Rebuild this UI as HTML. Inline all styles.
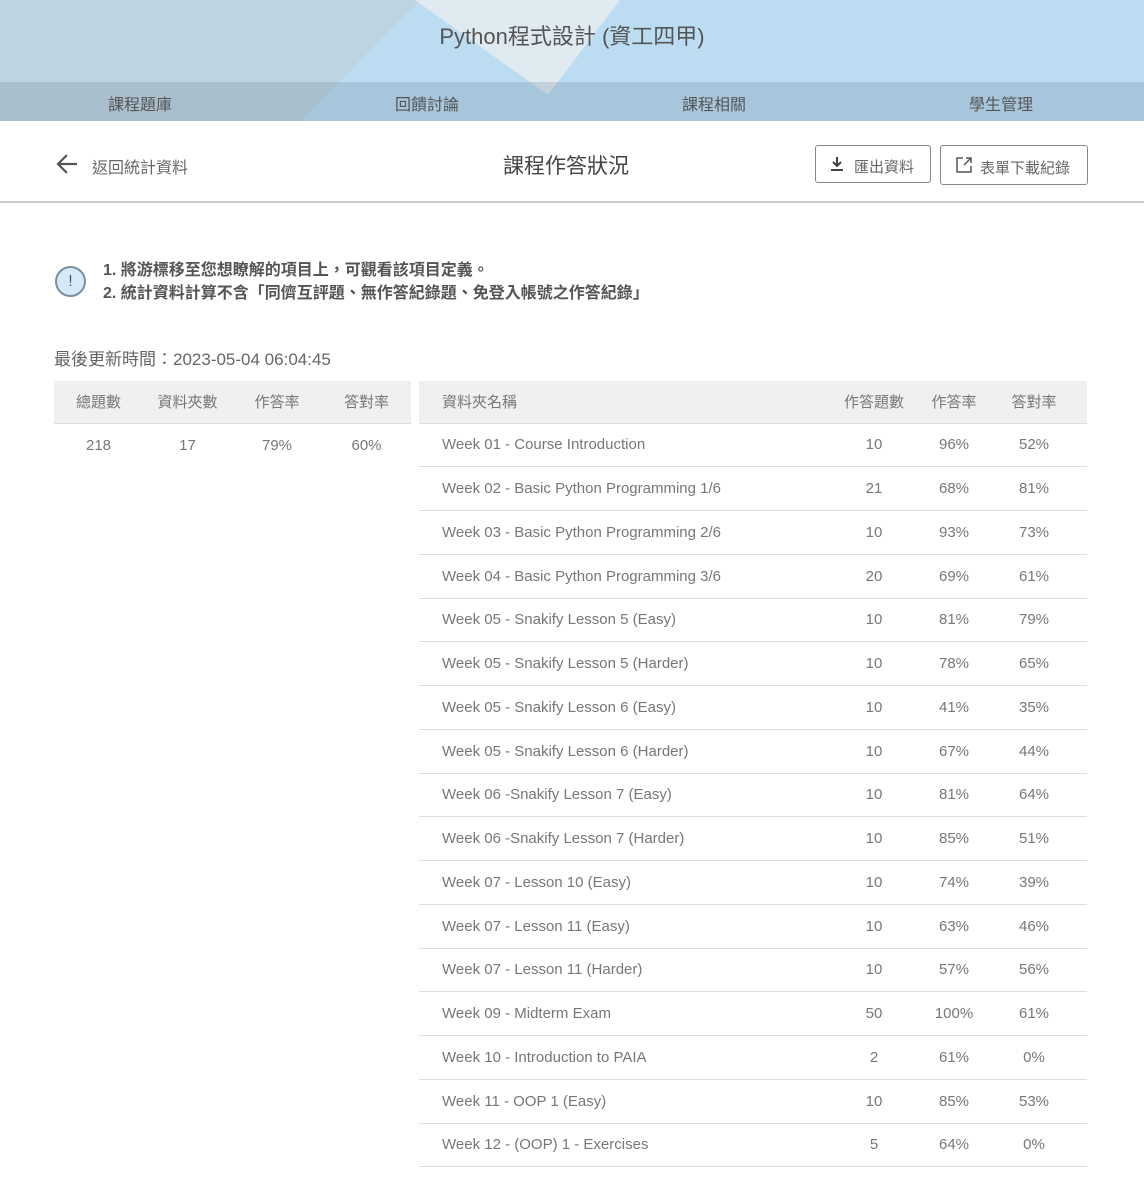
<!DOCTYPE html>
<html><head><meta charset="utf-8"><style>
*{margin:0;padding:0;box-sizing:border-box}
body{width:1144px;height:1183px;background:#fff;font-family:"Liberation Sans","Noto Sans CJK TC",sans-serif;color:#555;position:relative;overflow:hidden}
.hdr{position:absolute;left:0;top:0;width:1144px;height:121px;overflow:hidden;background:#bcdcf2}
.nav{position:absolute;left:0;top:82px;width:1144px;height:39px;background:rgba(90,110,130,0.2)}
.nav span{position:absolute;top:9px;font-size:16px;color:#555;transform:translateX(-50%)}
.title{position:absolute;top:19px;width:100%;text-align:center;font-size:22px;color:#555}
.ab{position:absolute}
table{border-collapse:collapse;font-size:15px;color:#777;table-layout:fixed}
th{font-weight:normal;background:#f0f0f0;height:42px;color:#777}
td{height:43.75px;border-bottom:1px solid #ddd}
</style></head><body>
<div class="hdr">
<svg width="1144" height="121" style="position:absolute;left:0;top:0">
<polygon points="0,0 420,0 300,121 0,121" fill="#bed4e1"/>
<polygon points="415,0 620,0 548,95" fill="#dfeaf1"/>
</svg>
<div class="title">Python程式設計 (資工四甲)</div>
<div class="nav"><span style="left:140px">課程題庫</span><span style="left:427px">回饋討論</span><span style="left:714px">課程相關</span><span style="left:1001px">學生管理</span></div>
</div>
<svg class="ab" style="left:56px;top:153px" width="24" height="22" viewBox="0 0 24 22"><path d="M21 11H3M11 2L2 11L11 20" stroke="#555" stroke-width="2.2" fill="none"/></svg>
<div class="ab" style="left:92px;top:154px;font-size:16px;color:#666">返回統計資料</div>
<div class="ab" style="left:503px;top:150px;font-size:21px;color:#444">課程作答狀況</div>
<div class="ab" style="left:815px;top:145px;width:116px;height:38px;border:1px solid #888;border-radius:3px;font-size:15px;color:#666;padding:10px 0 0 38px">匯出資料
<svg style="position:absolute;left:14px;top:10px" width="14" height="16" viewBox="0 0 14 16"><path d="M7 1V10M3 6L7 10L11 6M1 14H13" stroke="#444" stroke-width="2" fill="none"/></svg></div>
<div class="ab" style="left:940px;top:145px;width:148px;height:40px;border:1px solid #888;border-radius:3px;font-size:15px;color:#666;padding:11px 0 0 39px">表單下載紀錄
<svg style="position:absolute;left:14px;top:10px" width="18" height="18" viewBox="0 0 18 18"><path d="M8 2H2V16H16V10M11 2H16V7M16 2L9 9" stroke="#555" stroke-width="1.5" fill="none"/></svg></div>
<div class="ab" style="left:0;top:201px;width:1144px;height:2px;background:#ccc"></div>
<div class="ab" style="left:55px;top:266px;width:31px;height:31px;border:2px solid #7a8ea0;border-radius:50%;background:#d6e9f7;text-align:center;font-size:16px;line-height:27px;color:#556">!</div>
<div class="ab" style="left:103px;top:259px;font-size:16px;font-weight:bold;color:#555;line-height:23px">1. 將游標移至您想瞭解的項目上，可觀看該項目定義。<br>2. 統計資料計算不含「同儕互評題、無作答紀錄題、免登入帳號之作答紀錄」</div>
<div class="ab" style="left:54px;top:345px;font-size:17px;color:#666">最後更新時間：2023-05-04 06:04:45</div>
<table class="ab" style="left:54px;top:381px;width:357px;text-align:center">
<colgroup><col style="width:89px"><col style="width:89px"><col style="width:90px"><col style="width:89px"></colgroup>
<tr><th>總題數</th><th>資料夾數</th><th>作答率</th><th>答對率</th></tr>
<tr><td style="border-bottom:none;border-top:1px solid #ddd">218</td><td style="border-bottom:none;border-top:1px solid #ddd">17</td><td style="border-bottom:none;border-top:1px solid #ddd">79%</td><td style="border-bottom:none;border-top:1px solid #ddd">60%</td></tr>
</table>
<table class="ab" style="left:419px;top:381px;width:668px">
<colgroup><col style="width:415px"><col style="width:80px"><col style="width:80px"><col style="width:93px"></colgroup>
<tr><th style="text-align:left;padding-left:23px;border-bottom:1px solid #ddd">資料夾名稱</th><th style="border-bottom:1px solid #ddd">作答題數</th><th style="border-bottom:1px solid #ddd">作答率</th><th style="border-bottom:1px solid #ddd;padding-right:13px">答對率</th></tr>
<tbody style="text-align:center">
<tr><td style="text-align:left;padding-left:23px">Week 01 - Course Introduction</td><td>10</td><td>96%</td><td style="padding-right:13px">52%</td></tr>
<tr><td style="text-align:left;padding-left:23px">Week 02 - Basic Python Programming 1/6</td><td>21</td><td>68%</td><td style="padding-right:13px">81%</td></tr>
<tr><td style="text-align:left;padding-left:23px">Week 03 - Basic Python Programming 2/6</td><td>10</td><td>93%</td><td style="padding-right:13px">73%</td></tr>
<tr><td style="text-align:left;padding-left:23px">Week 04 - Basic Python Programming 3/6</td><td>20</td><td>69%</td><td style="padding-right:13px">61%</td></tr>
<tr><td style="text-align:left;padding-left:23px">Week 05 - Snakify Lesson 5 (Easy)</td><td>10</td><td>81%</td><td style="padding-right:13px">79%</td></tr>
<tr><td style="text-align:left;padding-left:23px">Week 05 - Snakify Lesson 5 (Harder)</td><td>10</td><td>78%</td><td style="padding-right:13px">65%</td></tr>
<tr><td style="text-align:left;padding-left:23px">Week 05 - Snakify Lesson 6 (Easy)</td><td>10</td><td>41%</td><td style="padding-right:13px">35%</td></tr>
<tr><td style="text-align:left;padding-left:23px">Week 05 - Snakify Lesson 6 (Harder)</td><td>10</td><td>67%</td><td style="padding-right:13px">44%</td></tr>
<tr><td style="text-align:left;padding-left:23px">Week 06 -Snakify Lesson 7 (Easy)</td><td>10</td><td>81%</td><td style="padding-right:13px">64%</td></tr>
<tr><td style="text-align:left;padding-left:23px">Week 06 -Snakify Lesson 7 (Harder)</td><td>10</td><td>85%</td><td style="padding-right:13px">51%</td></tr>
<tr><td style="text-align:left;padding-left:23px">Week 07 - Lesson 10 (Easy)</td><td>10</td><td>74%</td><td style="padding-right:13px">39%</td></tr>
<tr><td style="text-align:left;padding-left:23px">Week 07 - Lesson 11 (Easy)</td><td>10</td><td>63%</td><td style="padding-right:13px">46%</td></tr>
<tr><td style="text-align:left;padding-left:23px">Week 07 - Lesson 11 (Harder)</td><td>10</td><td>57%</td><td style="padding-right:13px">56%</td></tr>
<tr><td style="text-align:left;padding-left:23px">Week 09 - Midterm Exam</td><td>50</td><td>100%</td><td style="padding-right:13px">61%</td></tr>
<tr><td style="text-align:left;padding-left:23px">Week 10 - Introduction to PAIA</td><td>2</td><td>61%</td><td style="padding-right:13px">0%</td></tr>
<tr><td style="text-align:left;padding-left:23px">Week 11 - OOP 1 (Easy)</td><td>10</td><td>85%</td><td style="padding-right:13px">53%</td></tr>
<tr><td style="text-align:left;padding-left:23px">Week 12 - (OOP) 1 - Exercises</td><td>5</td><td>64%</td><td style="padding-right:13px">0%</td></tr>
</tbody></table>
</body></html>
